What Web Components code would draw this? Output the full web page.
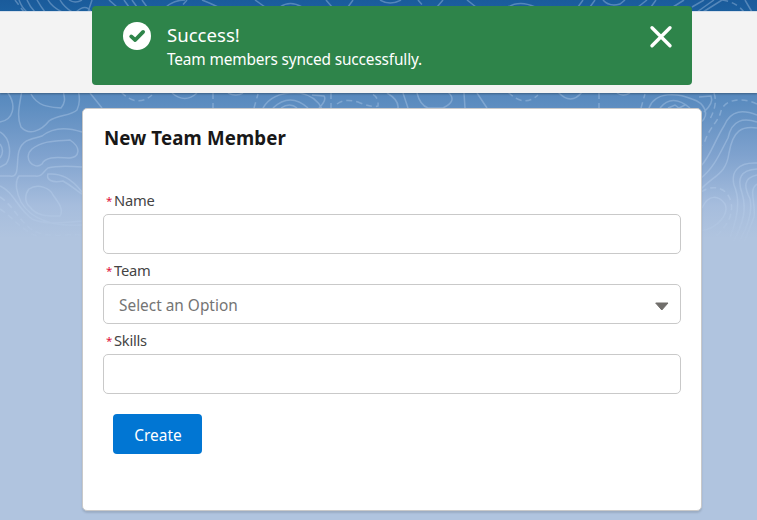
<!DOCTYPE html>
<html lang="en">
<head>
<meta charset="utf-8">
<title>New Team Member</title>
<style>
html,body{margin:0;height:100%;overflow:hidden}
body{font-family:"Noto Sans","Open Sans",sans-serif;color:#181818}
</style>
</head>
<body>
<team-page>
  <topo-backdrop slot="backdrop"></topo-backdrop>
  <toast-message slot="toast" heading="Success!">Team members synced successfully.</toast-message>
  <form-card heading="New Team Member">
    <form-field label="Name"></form-field>
    <form-field label="Team" type="select">Select an Option</form-field>
    <form-field label="Skills"></form-field>
    <brand-button>Create</brand-button>
  </form-card>
</team-page>
<script>
const define = (name, render) => customElements.define(name, class extends HTMLElement {
  connectedCallback() {
    if (!this.shadowRoot) this.attachShadow({mode: 'open'}).innerHTML = render(this);
  }
});

define('topo-backdrop', () => `
<style>
:host{display:block;width:100%;height:100%;background:linear-gradient(#1a5b9b 0,#1c60a0 12px,#5688bd 92px,#5d8dc0 105px,#7fa2ce 155px,#a6bddd 205px,#b0c4df 238px)}
svg{display:block;width:757px;height:260px;fill:none;stroke:#c4d9f2;stroke-width:1.5;-webkit-mask-image:linear-gradient(#000 150px,rgba(0,0,0,.85) 205px,transparent 245px)}
.d{stroke-dasharray:6 4}
</style>
<svg viewBox="0 0 757 260" opacity=".34">
<path d="M19 0Q22 8 27 12M27 0Q30 7 35 12M37 0Q41 7 45 12M48 0Q52 7 62 12M60 0Q64 7 72 12M69 0Q75 4 82 0M76 12Q86 3 91 12M92 0L88 12"/>
<path d="M109 0L117 7M124 0L129 7M132 0L137 7M142 0L147 7M166 7Q174 0 185 0M202 0Q210 3 218 7M255 0L265 7M280 7Q290 0 302 7M326 0L332 7M348 7L353 0M380 0Q390 6 401 0M437 7L443 0M467 0L476 7M508 7Q520 0 535 7M578 7L583 0M590 7L595 0M603 0Q609 7 620 4L625 0M638 7L647 0M656 0L651 7M673 7L684 0M692 7L704 0M697 12L714 0M703 12L722 0M745 0L752 12"/>
<path class="d" d="M722 0Q736 2 744 12M15 0L24 12M187 0L181 7M418 0L424 7"/>
<path d="M0 122C13 120 17 106 8 93L4 90M22 90C20 103 16 116 21 127C29 136 41 131 49 121C57 115 71 116 77 110C81 101 79 95 78 88M31 94C38 107 50 107 61 108C68 99 62 95 64 90M90 93L102 108"/>
<path d="M0 132C12 139 11 157 6 164L0 167M0 144Q5 151 0 158M0 176H10C20 179 16 161 19 151C23 138 34 139 42 136C53 127 67 127 82 132M32 149C43 140 58 141 70 140C82 148 79 157 70 158C61 158 46 155 42 164C34 171 22 158 32 149Z"/>
<path d="M82 167C70 166 55 166 48 168C42 173 42 177 35 176H19C14 182 17 194 21 202C31 220 55 227 82 225M82 192C71 178 61 173 48 174C46 180 52 183 63 181C72 186 77 191 82 194M29 189C38 183 50 188 53 195C59 203 64 210 60 216C50 216 37 217 30 207C24 202 25 194 29 189ZM0 186C14 192 17 208 32 219C46 225 62 223 82 221"/>
<path class="d" d="M0 197C14 206 20 223 34 231C48 238 62 234 82 235M0 209C14 218 23 233 41 237"/>
<path d="M172 93Q185 104 197 93M228 93Q236 97 243 93M263 108Q273 91 300 93Q316 96 322 109M273 108Q290 92 308 108M281 108Q290 102 297 108M312 95L324 96Q327 100 319 108M387 93Q399 100 398 108M403 93L408 108"/>
<path class="d" d="M121 92Q137 108 152 95M213 93V108M254 108L258 94M331 93V108M337 104Q345 98 358 102Q372 108 378 106Q379 96 370 93"/>
<path d="M417 93Q420 105 428 108H443Q458 101 448 92M464 93L465 108M477 93L487 108M558 92Q571 106 582 92M617 93Q623 97 630 93"/>
<path class="d" d="M508 92Q524 108 538 95M599 93V108M641 108L645 94"/>
<path d="M649 108C655 91 678 93 692 99C705 103 710 115 701 122M660 108Q672 93 690 108M668 108L675 105L679 108L685 105M699 97L711 96Q714 103 704 112"/>
<path class="d" d="M757 104C742 97 725 99 721 111C719 121 709 128 705 141L701 146M714 93Q718 104 710 119"/>
<path d="M701 166C710 157 715 140 724 126C731 109 744 110 757 115M701 178C714 168 720 153 728 138C732 119 744 118 757 122M701 189C716 174 726 174 729 153C733 130 742 126 757 128"/>
<path d="M757 163C737 162 731 173 734 185C741 201 737 220 730 237M757 169C740 170 737 179 742 193C747 209 743 223 734 241M757 175C743 178 744 187 750 199C753 213 747 227 739 242M757 184C748 190 756 202 754 217L744 243M702 208C709 193 719 196 725 204C729 213 719 228 701 231"/>
<path class="d" d="M701 192C713 184 727 187 731 202C734 217 725 228 714 238"/>
</svg>`);

define('team-page', () => `
<style>
:host{display:grid;grid-template-rows:11px 82px 1fr;height:520px;width:757px;position:relative;overflow:hidden}
.back{position:absolute;inset:0}
.bar{grid-row:2;position:relative;background:#f3f3f3;border-top:1px solid #d5deea;box-sizing:border-box;box-shadow:0 1px 2px rgba(0,0,0,.3)}
.body{grid-row:3;position:relative;padding:15px 55px 9px 82px}
.toast{position:absolute;left:92px;top:6px}
</style>
<div class="back"><slot name="backdrop"></slot></div>
<div class="bar"></div>
<main class="body"><slot></slot></main>
<div class="toast"><slot name="toast"></slot></div>`);

define('toast-message', el => `
<style>
:host{display:flex;box-sizing:border-box;width:600px;height:79px;padding:16px 19px 0 31px;border-radius:4px;background:#2e844a;color:#fff}
svg{flex:none;display:block}
.text{flex:1;margin-left:16px;margin-top:-1px}
h2{margin:0;font-size:18.6px;line-height:27px;font-weight:400;letter-spacing:0}
p{margin:0;font-size:15.4px;line-height:23px;letter-spacing:-.15px}
.close{margin-top:3px}
</style>
<svg width="28" height="28" viewBox="0 0 28 28"><circle cx="14" cy="14" r="14" fill="#fff"/><path d="M8.2 14.4L12.2 18L20.1 9.9" fill="none" stroke="#2e844a" stroke-width="3.8" stroke-linecap="round" stroke-linejoin="round"/></svg>
<div class="text"><h2><span>${el.getAttribute('heading')}</span></h2><p><span><slot></slot></span></p></div>
<svg class="close" width="24" height="24" viewBox="0 0 24 24"><path d="M3 2.8L21 20.8M21 2.8L3 20.8" stroke="#fff" stroke-width="3.4" stroke-linecap="round"/></svg>`);

define('form-card', el => `
<style>
:host{display:flex;flex-direction:column;box-sizing:border-box;width:620px;height:403px;padding:16px 20px 0;background:#fff;border:1px solid #c9c9c9;border-radius:5px;box-shadow:0 2px 2px rgba(0,0,0,.12)}
h1{margin:0 0 39px 1px;font-size:18.7px;line-height:26px;font-weight:700;height:26px;letter-spacing:.13px}
</style>
<h1><span>${el.getAttribute('heading')}</span></h1><slot></slot>`);

define('form-field', el => `
<style>
:host{display:flex;flex:none;flex-direction:column;height:70px;box-sizing:border-box}
label{display:flex;flex:none;gap:3px;height:24px;line-height:20px;padding-left:3px;font-size:14.7px;color:#444;letter-spacing:-.25px}
b{color:#e0143c;font-weight:400;font-size:11.5px;line-height:21px;width:5px}
.box{display:flex;flex:none;align-items:center;justify-content:space-between;box-sizing:border-box;width:578px;height:40px;padding:3px 11px 0 15px;border:1px solid #c9c9c9;border-radius:5px;background:#fff;font-size:15.4px;color:#747474}
svg{margin-top:1px}
</style>
<label><b>*</b><span>${el.getAttribute('label')}</span></label>
<div class="box"><span><slot></slot></span>${el.getAttribute('type') === 'select' ? '<svg width="15" height="9" viewBox="0 0 15 9"><path d="M1.7 1H14L7.8 8Z" fill="#706e6b" stroke="#706e6b" stroke-linejoin="round"/></svg>' : ''}</div>`);

define('brand-button', () => `
<style>
:host{display:block;margin:14px 0 0 10px}
button{display:block;width:89px;height:40px;padding:4px 0 0 1px;border:0;border-radius:4px;background:#0176d3;color:#fff;font:15.4px/36px "Noto Sans","Open Sans",sans-serif}
</style>
<button><slot></slot></button>`);
</script>
</body>
</html>
